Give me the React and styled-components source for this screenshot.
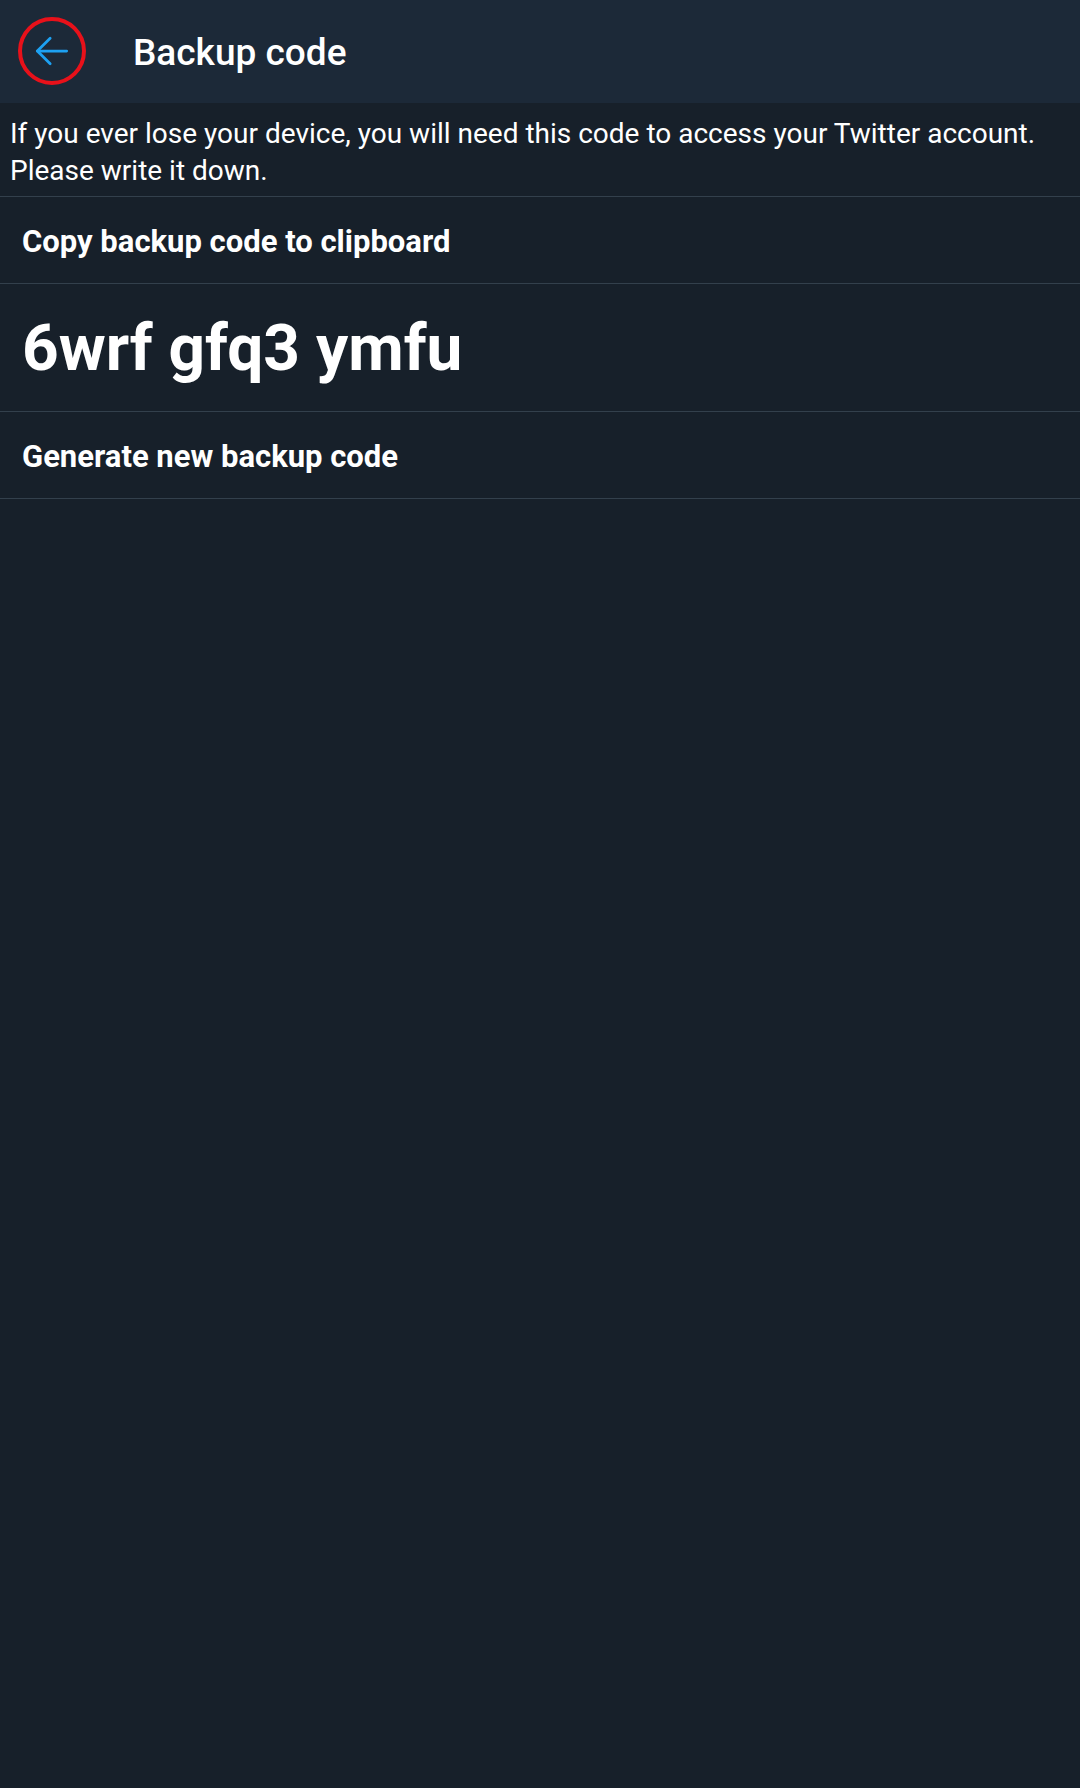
import React from 'react';
import styled, { createGlobalStyle } from 'styled-components';

const GlobalStyle = createGlobalStyle`
  html, body {
    margin: 0;
    padding: 0;
    background: #17202a;
  }
  body {
    font-family: Roboto, "Liberation Sans", sans-serif;
    color: #ffffff;
  }
`;

function BackArrow() {
    return (
        <svg width="44" height="44" viewBox="0 0 24 24" fill="none" stroke="#1da1f2" strokeWidth="1.5" strokeLinecap="round" strokeLinejoin="round">
            <path d="M20 12H4" />
            <path d="M11 5l-7 7 7 7" />
        </svg>
    );
}

export default function App() {
    return (
        <>
            <GlobalStyle />
            <Page>
                <Header>
                    <BackButton>
                        <BackArrow />
                    </BackButton>
                    <Title>Backup code</Title>
                </Header>
                <Intro>
                    If you ever lose your device, you will need this code to access your Twitter account.
                    Please write it down.
                </Intro>
                <Row>Copy backup code to clipboard</Row>
                <CodeRow>6wrf gfq3 ymfu</CodeRow>
                <Row>Generate new backup code</Row>
            </Page>
        </>
    );
}

const Page = styled.div`
    min-height: 1788px;
    background: #17202a;
    display: flex;
    flex-direction: column;
`;

const Header = styled.header`
    height: 103px;
    background: #1c2938;
    display: flex;
    align-items: center;
    padding-left: 18px;
    box-sizing: border-box;
`;

const BackButton = styled.div`
    width: 68px;
    height: 68px;
    border: 4px solid #e8111a;
    border-radius: 50%;
    box-sizing: border-box;
    display: flex;
    align-items: center;
    justify-content: center;
    margin-top: -2px;
`;

const Title = styled.h1`
    margin: 2px 0 0 47px;
    font-size: 37px;
    font-weight: 500;
    color: #ffffff;
`;

const Intro = styled.p`
    margin: 0;
    padding: 12px 10px 7px;
    font-size: 28px;
    line-height: 37px;
    color: #ffffff;
    border-bottom: 1px solid #33404c;
`;

const Row = styled.div`
    height: 87px;
    display: flex;
    align-items: center;
    padding: 2px 0 0 22px;
    font-size: 31px;
    font-weight: 700;
    border-bottom: 1px solid #33404c;
    box-sizing: border-box;
`;

const CodeRow = styled(Row)`
    height: 128px;
    font-size: 64px;
`;
